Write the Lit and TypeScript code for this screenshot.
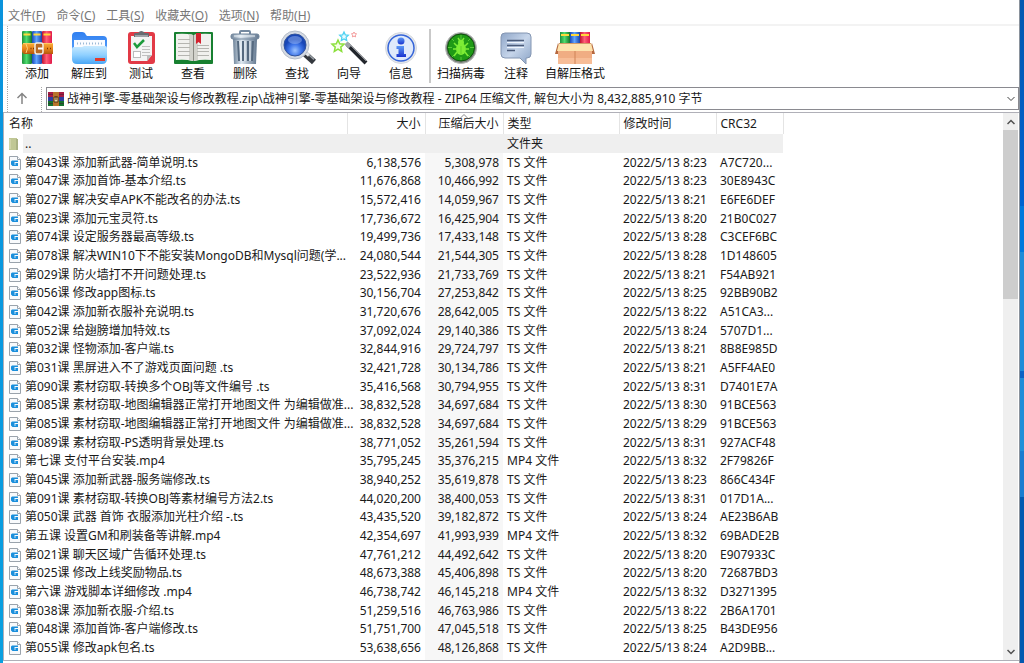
import { LitElement, html, css, svg } from "lit";
import { customElement, property } from "lit/decorators.js";

type Entry = [name: string, size: string, packed: string, type: string, time: string, crc: string];

const ts = (n: string, s: string, p: string, t: string, c: string): Entry => [
  n, s, p, n.endsWith(".mp4") ? "MP4 文件" : "TS 文件", `2022/5/13 ${t}`, c,
];

const entries: Entry[] = [
  ts("第043课 添加新武器-简单说明.ts", "6,138,576", "5,308,978", "8:23", "A7C720..."),
  ts("第047课 添加首饰-基本介绍.ts", "11,676,868", "10,466,992", "8:23", "30E8943C"),
  ts("第027课 解决安卓APK不能改名的办法.ts", "15,572,416", "14,059,967", "8:21", "E6FE6DEF"),
  ts("第023课 添加元宝灵符.ts", "17,736,672", "16,425,904", "8:20", "21B0C027"),
  ts("第074课 设定服务器最高等级.ts", "19,499,736", "17,433,148", "8:28", "C3CEF6BC"),
  ts("第078课 解决WIN10下不能安装MongoDB和Mysql问题(学...", "24,080,544", "21,544,305", "8:28", "1D148605"),
  ts("第029课 防火墙打不开问题处理.ts", "23,522,936", "21,733,769", "8:21", "F54AB921"),
  ts("第056课 修改app图标.ts", "30,156,704", "27,253,842", "8:25", "92BB90B2"),
  ts("第042课 添加新衣服补充说明.ts", "31,720,676", "28,642,005", "8:22", "A51CA3..."),
  ts("第052课 给翅膀增加特效.ts", "37,092,024", "29,140,386", "8:24", "5707D1..."),
  ts("第032课 怪物添加-客户端.ts", "32,844,916", "29,724,797", "8:21", "8B8E985D"),
  ts("第031课 黑屏进入不了游戏页面问题 .ts", "32,421,728", "30,134,786", "8:21", "A5FF4AE0"),
  ts("第090课 素材窃取-转换多个OBJ等文件编号 .ts", "35,416,568", "30,794,955", "8:31", "D7401E7A"),
  ts("第085课 素材窃取-地图编辑器正常打开地图文件 为编辑做准...", "38,832,528", "34,697,684", "8:30", "91BCE563"),
  ts("第085课 素材窃取-地图编辑器正常打开地图文件 为编辑做准...", "38,832,528", "34,697,684", "8:29", "91BCE563"),
  ts("第089课 素材窃取-PS透明背景处理.ts", "38,771,052", "35,261,594", "8:31", "927ACF48"),
  ts("第七课 支付平台安装.mp4", "35,795,245", "35,376,215", "8:32", "2F79826F"),
  ts("第045课 添加新武器-服务端修改.ts", "38,940,252", "35,619,878", "8:23", "866C434F"),
  ts("第091课 素材窃取-转换OBJ等素材编号方法2.ts", "44,020,200", "38,400,053", "8:31", "017D1A..."),
  ts("第050课 武器 首饰 衣服添加光柱介绍 -.ts", "43,435,520", "39,182,872", "8:24", "AE23B6AB"),
  ts("第五课 设置GM和刷装备等讲解.mp4", "42,354,697", "41,993,939", "8:32", "69BADE2B"),
  ts("第021课 聊天区域广告循环处理.ts", "47,761,212", "44,492,642", "8:20", "E907933C"),
  ts("第025课 修改上线奖励物品.ts", "48,673,388", "45,406,898", "8:20", "72687BD3"),
  ts("第六课 游戏脚本详细修改 .mp4", "46,738,742", "46,145,218", "8:32", "D3271395"),
  ts("第038课 添加新衣服-介绍.ts", "51,259,516", "46,763,986", "8:22", "2B6A1701"),
  ts("第048课 添加首饰-客户端修改.ts", "51,751,700", "47,045,518", "8:25", "B43DE956"),
  ts("第055课 修改apk包名.ts", "53,638,656", "48,126,868", "8:24", "A2D9BB..."),
];

const books = svg`
  <defs>
    <linearGradient id="bg" x2="1"><stop stop-color="#1d8f3a"/><stop offset=".45" stop-color="#4fdc6d"/><stop offset="1" stop-color="#14752c"/></linearGradient>
    <linearGradient id="bb" x2="1"><stop stop-color="#1a49b8"/><stop offset=".45" stop-color="#5fa4ff"/><stop offset="1" stop-color="#1a43a8"/></linearGradient>
    <linearGradient id="br" x2="1"><stop stop-color="#c01331"/><stop offset=".45" stop-color="#ff5d77"/><stop offset="1" stop-color="#e01848"/></linearGradient>
    <linearGradient id="belt" x2="0" y2="1"><stop stop-color="#f9b03c"/><stop offset=".5" stop-color="#e8871c"/><stop offset="1" stop-color="#b4560c"/></linearGradient>
  </defs>`;

const icons: Record<string, unknown> = {
  add: svg`${books}
    <rect x="1" y="0" width="10" height="33" rx="1" fill="url(#bg)"/>
    <rect x="11" y="0" width="10" height="33" rx="1" fill="url(#bb)"/>
    <rect x="21" y="0" width="10" height="33" rx="1" fill="url(#br)"/>
    <path d="M2.500 3.500h7M12.500 3.500h7M22.500 3.500h7" stroke="#ffd83b" stroke-width="2"/>
    <rect x="1" y="12" width="15" height="11" rx="3" fill="url(#belt)"/>
    <rect x="20" y="12" width="12" height="11" fill="url(#belt)"/>
    <path d="M5 13q3 4.500 0 9" stroke="#ffd37a" fill="none"/>
    <path d="M2 12.500h13M21 12.500h11" stroke="#ffc864"/>
    <rect x="14" y="12" width="8" height="11" rx="2" fill="#b96a23" stroke="#f1ede6" stroke-width="1.500"/>
    <path d="M17 17.500h5" stroke="#fff" stroke-width="2"/>
    <path d="M9.500 17.500h1M12 17.500h1M26 17.500h1M29 17.500h1" stroke="#7a3503" stroke-width="1.500"/>`,
  extract: svg`
    <defs><linearGradient id="ff" x2="0" y2="1"><stop stop-color="#c8eaff"/><stop offset=".5" stop-color="#8fd0ff"/><stop offset="1" stop-color="#4aa7f5"/></linearGradient>
    <linearGradient id="fb" x2="0" y2="1"><stop stop-color="#2f7ff0"/><stop offset="1" stop-color="#62aaff"/></linearGradient></defs>
    <path d="M-1 5q0-4 4-4h6q3 0 4 3l1 1h16q4 0 4 4v18H-1z" fill="url(#fb)"/>
    <path d="M1 9h31v8H1z" fill="#fafcff"/>
    <path d="M4 12.500h27" stroke="#9cb9d6" stroke-width="2" stroke-dasharray="1 2"/>
    <path d="M-1 18q0-2 2-2h8l2-1h21q2 0 2 2v11q0 5-5 5H4q-5 0-5-5z" fill="url(#ff)"/>
    <rect x="22" y="27" width="10" height="3" fill="#e23a2c"/>`,
  test: svg`
    <rect x="3" y="1" width="27" height="32" rx="3" fill="#e23a46"/>
    <path d="M6 5h21v19l-5 6H6z" fill="#f4f4f4"/><path d="M27 24l-5 6v-6z" fill="#bdbdbd"/>
    <path d="M9 6V3q0-1 2-1h2q3-4 7 0h2q2 0 2 1v3z" fill="#686c72"/><path d="M10 5h13" stroke="#d6d8dc"/>
    <path d="M9 12l3 4 7-7" fill="none" stroke="#1d9b3c" stroke-width="2.500"/>
    <rect x="8.500" y="20.500" width="7" height="6" fill="#fff" stroke="#bbb"/>
    <path d="M17 15.500h8M17 18.500h8M17 21.500h8M17 24.500h5" stroke="#c0c0c0"/>`,
  view: svg`
    <rect x="-3" y="1" width="39" height="32" rx="1" fill="#178030"/>
    <path d="M-1 3q9-1 17 1v26q-8-2-17-1zM34 3q-9-1-17 1v26q8-2 17-1z" fill="#f1f1ee"/>
    <path d="M12 3q3 0 4 1v26l-4-1zM21 3q-3 0-4 1v26l4-1z" fill="#d2d2cc"/>
    <path d="M1 8.500h12M1 12.500h12M1 16.500h12M1 20.500h12M1 24.500h12M20 14.500h12M20 17.500h12M20 20.500h12M20 24.500h12" stroke="#b5b5b0"/>
    <path d="M16.500 4v26" stroke="#8b8b84"/><path d="M19 2h5v11l-2.500-2-2.500 2z" fill="#d3222f"/>`,
  remove: svg`
    <defs><linearGradient id="can" x2="1"><stop stop-color="#6d8298"/><stop offset=".35" stop-color="#dde7f0"/><stop offset="1" stop-color="#62778f"/></linearGradient></defs>
    <path d="M11 3V1q0-1 1-1h8q1 0 1 1v2" fill="none" stroke="#7489a0" stroke-width="2"/>
    <path d="M4 8h24l-1 25H5z" fill="url(#can)"/>
    <path d="M9 10l1 20M14 10v20M19 10v20M24 10l-1 20" stroke="#55697f" stroke-width="2"/>
    <path d="M11 10l1 20M16 10v20M21 10v20" stroke="#edf3f8"/>
    <rect x="2" y="3" width="28" height="5" rx="2" fill="url(#can)" stroke="#70859b"/><path d="M5 5h21" stroke="#eef4f9"/>`,
  find: svg`
    <defs><radialGradient id="lens" cx=".5" cy=".75"><stop stop-color="#9dc4ff"/><stop offset=".55" stop-color="#3f76ea"/><stop offset="1" stop-color="#1846b6"/></radialGradient></defs>
    <path d="M23 22l10 9" stroke="#34383e" stroke-width="6"/><path d="M24 21l4 3.500" stroke="#e3e6ea" stroke-width="3"/><path d="M28 24l5 4.500" stroke="#9ba1a8" stroke-width="1.500"/>
    <circle cx="14" cy="14" r="14" fill="#d5dae2" stroke="#b5bdc9"/><circle cx="14" cy="14" r="11" fill="url(#lens)" stroke="#31539c"/>
    <ellipse cx="14" cy="9" rx="7" ry="4" fill="#b6d0ff" opacity=".4"/>`,
  wizard: svg`
    <path d="M14 13l19 19" stroke="#22262c" stroke-width="4"/><path d="M15 12l18 18" stroke="#8a8e94"/><path d="M13 12l4 4" stroke="#9ea3aa" stroke-width="4"/>
    <path d="M5 9l1.700 3.800 4.300.4-3.200 2.900.9 4.300L5 18.200l-3.700 2.200.9-4.300L-1 13.200l4.300-.4z" fill="#f4ffe6" stroke="#8be03c" stroke-width="1.500"/>
    <path d="M11 1l1.300 2.800 3 .4-2.200 2.100.6 3.100L11 7.900 8.300 9.400l.6-3.100-2.200-2.100 3-.4z" fill="#e8fbff" stroke="#4fd2f2" stroke-width="1.300"/>
    <path d="M21 1l.8 1.600 1.800.3-1.300 1.200.3 1.800-1.600-.8-1.600.8.3-1.800-1.300-1.200 1.800-.3z" fill="#fff" stroke="#f49a9a"/>`,
  info: svg`
    <defs><linearGradient id="ii" x2="0" y2="1"><stop stop-color="#5b97f5"/><stop offset="1" stop-color="#1b34cf"/></linearGradient></defs>
    <circle cx="16" cy="17" r="15.500" fill="#e6e8ec" stroke="#d5d9df"/><circle cx="16" cy="17" r="13" fill="#dfe9fb" stroke="#3565d8" stroke-width="1.500"/>
    <circle cx="16" cy="10" r="3.500" fill="url(#ii)"/><path d="M11.500 15h7.500v8h2v3h-9.500v-3h2v-5h-2z" fill="url(#ii)"/>`,
  virus: svg`
    <circle cx="16" cy="17" r="15.500" fill="#7d827e" stroke="#b8bcb9"/><circle cx="16" cy="16.500" r="13.500" fill="#1f9a16" stroke="#0c4f0b"/>
    <path d="M16 4v4M16 26v3M3 16.500h4M25 16.500h4M7 8l2 2M25 8l-2 2M7 26l2-2M25 26l-2-2" stroke="#58c83a"/>
    <ellipse cx="16" cy="18" rx="5" ry="6" fill="#7ded35"/><circle cx="16" cy="11.500" r="3" fill="#7ded35"/>
    <path d="M13 7l2 3M19 7l-2 3M12 15l-3-3M20 15l3-3M11 18H8M21 18h3M12 21l-3 4M20 21l3 4" stroke="#7ded35" stroke-width="1.500"/>
    <path d="M16 15v8" stroke="#5fcf28"/>`,
  comment: svg`
    <defs><linearGradient id="cm" x2="1" y2="1"><stop stop-color="#8fa6c8"/><stop offset=".5" stop-color="#c6d5ea"/><stop offset="1" stop-color="#8aa3c6"/></linearGradient></defs>
    <path d="M5 2h22q4 0 4 4v17q0 4-4 4h-1v6l-6-6H5q-4 0-4-4V6q0-4 4-4z" fill="url(#cm)" stroke="#8496b2"/>
    <path d="M7 9.500h17M7 14.500h17M7 19.500h8" stroke="#4a5a78" stroke-width="1.500"/><path d="M7 11.500h17M7 16.500h17" stroke="#eef4fc"/>`,
  sfx: svg`${books}
    <rect x="1" y="1" width="10" height="13" fill="url(#bg)"/><rect x="11" y="1" width="10" height="13" fill="url(#bb)"/><rect x="21" y="1" width="10" height="13" fill="url(#br)"/>
    <path d="M2 4h8M12 4h8M22 4h8" stroke="#ffd83b" stroke-width="2"/>
    <path d="M-1 12L-4 23h4l3-3M33 12l3 11h-4l-3-3" fill="#b5683e"/>
    <path d="M-1 19h34v14H-1z" fill="#f0ad83"/><path d="M-1 27h34v6H-1z" fill="#f7bd97"/>
    <path d="M0 12h32l2 8H-2z" fill="#fde3ae"/><path d="M0 12.500h32" stroke="#d29b68"/><path d="M16 20v13" stroke="#cf8356"/>`,
};

@customElement("tool-button")
class ToolButton extends LitElement {
  @property() label = "";
  @property() icon = "";
  static styles = css`
    :host { display: flex; }
    .tool {
      flex: 1; display: flex; flex-direction: column; align-items: center; gap: 2px;
      padding: 5px 0 0; border: 0; background: none; color: #111;
      font: 12px/18px "Noto Sans", "Noto Sans CJK SC", sans-serif; white-space: nowrap;
    }
    .glyph { width: 32px; height: 32px; overflow: visible; }
  `;
  render() {
    return html`<button class="tool" type="button">
      <svg class="glyph" viewBox="0 0 32 32" aria-hidden="true">${icons[this.icon]}</svg>
      <span>${this.label}</span>
    </button>`;
  }
}

const menus = [["文件", "F"], ["命令", "C"], ["工具", "S"], ["收藏夹", "O"], ["选项", "N"], ["帮助", "H"]];
const tools = [["add", "添加"], ["extract", "解压到"], ["test", "测试"], ["view", "查看"], ["remove", "删除"], ["find", "查找"], ["wizard", "向导"], ["info", "信息"]];

const fileIcon = html`<svg class="mark" viewBox="0 0 12 14" aria-hidden="true">
  <path d="M.5.5h8l3 3v10H.5z" fill="#f8fafc" stroke="#9aa3ac"/><path d="M8.500.5v3h3" fill="#fff" stroke="#9aa3ac"/>
  <path d="M3 4.500h6V6H5.500v1H9v3H3.500L2 8.500v-3z" fill="#1a8fdc"/><path d="M5 7.500h2v1H5z" fill="#bfe4fa"/></svg>`;
const folderIcon = html`<svg class="mark" viewBox="0 0 12 14" aria-hidden="true">
  <path d="M0 1h8v12H0z" fill="#c0c795"/><path d="M7 2h2v11H7z" fill="#a9b184"/><path d="M1 2v10" stroke="#dde0bd"/></svg>`;

@customElement("app-root")
class AppRoot extends LitElement {
  static styles = css`
    :host {
      display: grid; grid-template-columns: 3px minmax(0, 1fr) 4px; height: 100vh; overflow: hidden;
      font: 12px/18px "Noto Sans", "Noto Sans CJK SC", sans-serif; color: #1a1a1a;
    }
    .edge-left { background: linear-gradient(#0a93dc, #0a9ae0 60%, #0aa0e0); }
    .edge-right {
      background: linear-gradient(#0259b0, #0062d0 31%, #0078dc 31%, #0078dc 38%, #1e8cd8 38%, #1e8cd8 56%,
        #0b62c4 56%, #0b62c4 57%, #1e8cd8 57%, #2090d8 68%, #1a7cd0 68%, #1a7cd0 75%, #0259b0 75%, #0259b0);
    }
    .window { display: flex; flex-direction: column; min-width: 0; min-height: 0; background: #fff; border-right: 1px solid #8a929c; }
    .menubar { display: flex; gap: 11px; padding: 8px 5px 0; border-bottom: 2px solid #f3f3f3; color: #777; }
    .menu { border: 0; padding: 0; background: none; color: inherit; font: inherit; line-height: 16px; }
    .accel { text-decoration: underline; }
    .toolbar { display: flex; height: 61px; margin-left: 4px; padding-left: 3px; border-left: 1px dotted #aaa; }
    .tool { width: 52px; }
    .tool.wide { width: 58px; }
    .tool.wider { width: 66px; }
    .divider { width: 2px; margin: 3px 1px 4px 2px; background: #c9c9c9; }
    .location { display: flex; height: 25px; margin-left: 4px; border-left: 1px dotted #aaa; }
    .up { width: 34px; padding: 0 6px 4px 0; border: 0; border-right: 1px dotted #aaa; background: none; display: grid; place-items: center; }
    .up svg { width: 12px; height: 12px; }
    .address { flex: 1; min-width: 0; display: flex; align-items: center; gap: 3px; margin: 0 0 2px 4px; padding: 0 3px 0 1px; border: 1px solid #8a8a90; }
    .address-icon { width: 16px; height: 14px; }
    .path { flex: 1; min-width: 0; appearance: none; border: 0; padding: 0; background: none; color: inherit; font: inherit; outline: 0; }
    .chevron { width: 8px; height: 8px; }
    .panel { flex: 1; min-height: 0; display: flex; margin-bottom: 2px; border: solid #b0b0b8; border-width: 1px 0 1px 1px; }
    .files { flex: 1; min-width: 0; overflow: hidden; }
    .list { table-layout: fixed; width: 779px; border-collapse: collapse; }
    .c-name { width: 343px; } .c-size { width: 78px; } .c-packed { width: 78px; }
    .c-type { width: 116px; } .c-time { width: 97px; } .c-crc { width: 67px; }
    th, td { padding: 0 4px; white-space: nowrap; text-align: left; font-weight: 400; line-height: 18px; }
    th { height: 21px; padding-top: 1px; box-sizing: border-box; border-right: 1px solid #e4e4e4; }
    .num { text-align: right; }
    th:first-child, td:first-child { padding-left: 5px; }
    .list tbody tr { height: 19px; }
    .list tbody tr:nth-child(3n) { height: 18px; }
    .packed { background: #f7f7f7; }
    th.packed { position: relative; background: #fff; }
    .parent td { background: #efefef; }
    .parent td:first-child { background: linear-gradient(90deg, #fff 19px, #efefef 19px); }
    .name { display: flex; align-items: center; gap: 4px; }
    .mark { flex: none; width: 12px; height: 14px; }
    .sort { position: absolute; top: 1px; left: 50%; width: 8px; height: 5px; margin-left: -4px; }
    .scroll { width: 15px; margin-right: 1px; display: flex; flex-direction: column; background: #efefef; }
    .step { height: 17px; padding: 0; border: 0; background: none; display: grid; place-items: center; }
    .step svg { width: 8px; height: 8px; }
    .track { flex: 1; }
    .thumb { height: 33%; background: #cdcdcd; }
  `;

  private line(d: string, color = "#505050", width = 1.5) {
    return html`<svg class="chevron" viewBox="0 0 8 8" aria-hidden="true"><path d=${d} fill="none" stroke=${color} stroke-width=${width} /></svg>`;
  }

  render() {
    return html`
      <div class="edge-left"></div>
      <main class="window">
        <nav class="menubar">
          ${menus.map(([t, k]) => html`<button class="menu" type="button">${t}(<span class="accel">${k}</span>)</button>`)}
        </nav>
        <div class="toolbar">
          ${tools.map(([i, l]) => html`<tool-button class="tool" icon=${i} label=${l}></tool-button>`)}
          <div class="divider"></div>
          <tool-button class="tool wide" icon="virus" label="扫描病毒"></tool-button>
          <tool-button class="tool" icon="comment" label="注释"></tool-button>
          <tool-button class="tool wider" icon="sfx" label="自解压格式"></tool-button>
        </div>
        <div class="location">
          <button class="up" type="button" aria-label="向上">
            <svg viewBox="0 0 12 12"><path d="M6 12V1.500M1.500 6L6 1.500 10.500 6" fill="none" stroke="#858585" stroke-width="1.500"/></svg>
          </button>
          <label class="address">
            <svg class="address-icon" viewBox="0 0 16 14" aria-hidden="true">
              <path d="M0 0h16v5H0z" fill="#a51b45"/><path d="M0 5h16v4H0z" fill="#2e3fa0"/><path d="M0 9h16v5H0z" fill="#15702f"/>
              <path d="M0 2.500h16M0 11.500h16" stroke="#40202a" opacity=".5"/>
              <path d="M5 0h6v14H5z" fill="#b8742c"/><path d="M6 5h4v5H6z" fill="#ead7a5" stroke="#55320f"/><path d="M8 4v4" stroke="#55320f"/>
            </svg>
            <select class="path" aria-label="路径">
              <option>战神引擎-零基础架设与修改教程.zip\\战神引擎-零基础架设与修改教程 - ZIP64 压缩文件, 解包大小为 8,432,885,910 字节</option>
            </select>
            ${this.line("M.5 2L4 5.500 7.500 2", "#404040", 1)}
          </label>
        </div>
        <section class="panel">
          <div class="files">
            <table class="list">
              <colgroup><col class="c-name"><col class="c-size"><col class="c-packed"><col class="c-type"><col class="c-time"><col class="c-crc"></colgroup>
              <thead>
                <tr><th>名称</th><th class="num">大小</th><th class="num packed"><svg class="sort" viewBox="0 0 8 5" aria-hidden="true"><path d="M.5 4L4 .5 7.500 4" fill="none" stroke="#8a8a8a"/></svg>压缩后大小</th><th>类型</th><th>修改时间</th><th>CRC32</th></tr>
              </thead>
              <tbody>
                <tr class="parent"><td><div class="name">${folderIcon}<span>..</span></div></td><td></td><td></td><td>文件夹</td><td></td><td></td></tr>
                ${entries.map(([n, s, p, t, d, c]) => html`<tr>
                  <td><div class="name">${fileIcon}<span>${n}</span></div></td>
                  <td class="num">${s}</td><td class="num packed">${p}</td><td>${t}</td><td>${d}</td><td>${c}</td>
                </tr>`)}
                <tr><td><div class="name">${fileIcon}</div></td><td></td><td class="packed"></td><td></td><td></td><td></td></tr>
              </tbody>
            </table>
          </div>
          <div class="scroll">
            <button class="step" type="button" aria-label="向上滚动">${this.line("M.5 6L4 2.500 7.500 6")}</button>
            <div class="track"><div class="thumb"></div></div>
            <button class="step" type="button" aria-label="向下滚动">${this.line("M.5 2L4 5.500 7.500 2")}</button>
          </div>
        </section>
      </main>
      <div class="edge-right"></div>
    `;
  }
}
